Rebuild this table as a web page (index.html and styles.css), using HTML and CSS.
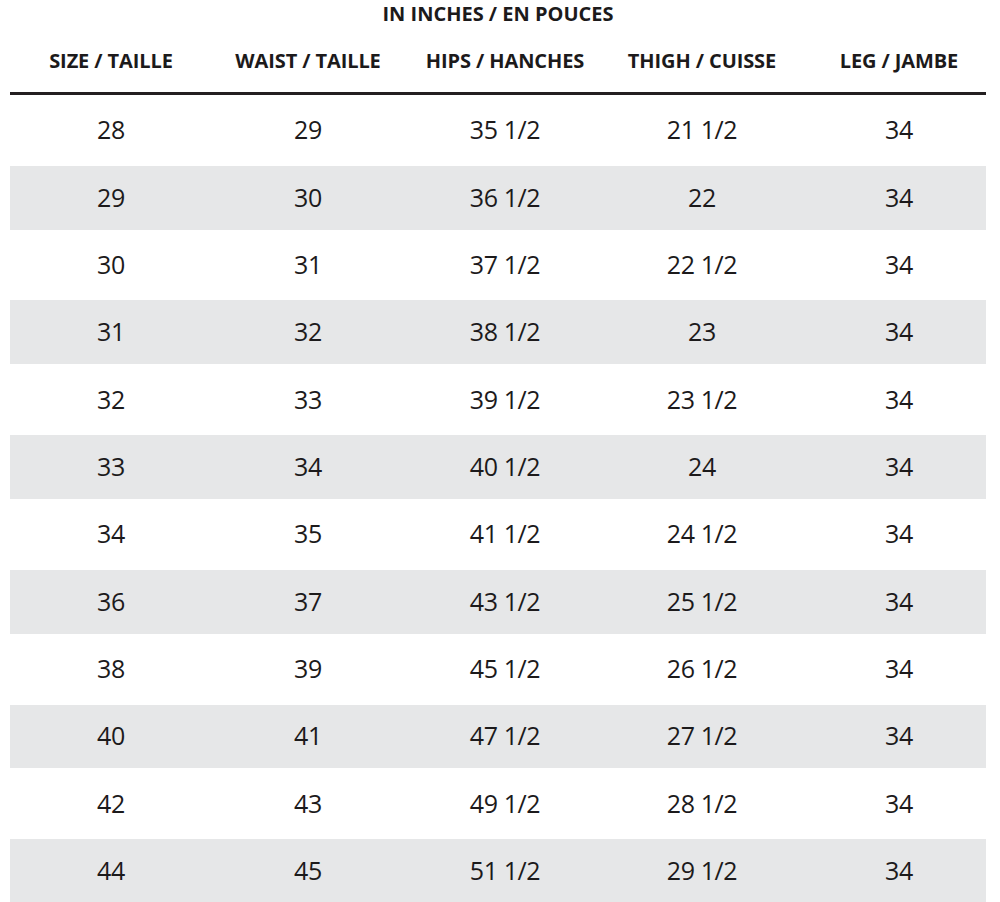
FILE: index.html
```html
<!DOCTYPE html>
<html lang="en">
<head>
<meta charset="utf-8">
<title>Size chart</title>
<link rel="stylesheet" href="styles.css">
</head>
<body>
<div class="chart">
  <div class="title">IN INCHES / EN POUCES</div>
  <div class="head">
    <div class="cell">SIZE / TAILLE</div>
    <div class="cell">WAIST / TAILLE</div>
    <div class="cell">HIPS / HANCHES</div>
    <div class="cell">THIGH / CUISSE</div>
    <div class="cell">LEG / JAMBE</div>
  </div>
  <div class="rule"></div>
  <div class="row"><div class="cell">28</div><div class="cell">29</div><div class="cell">35 1/2</div><div class="cell">21 1/2</div><div class="cell">34</div></div>
  <div class="row alt"><div class="cell">29</div><div class="cell">30</div><div class="cell">36 1/2</div><div class="cell">22</div><div class="cell">34</div></div>
  <div class="row"><div class="cell">30</div><div class="cell">31</div><div class="cell">37 1/2</div><div class="cell">22 1/2</div><div class="cell">34</div></div>
  <div class="row alt"><div class="cell">31</div><div class="cell">32</div><div class="cell">38 1/2</div><div class="cell">23</div><div class="cell">34</div></div>
  <div class="row"><div class="cell">32</div><div class="cell">33</div><div class="cell">39 1/2</div><div class="cell">23 1/2</div><div class="cell">34</div></div>
  <div class="row alt"><div class="cell">33</div><div class="cell">34</div><div class="cell">40 1/2</div><div class="cell">24</div><div class="cell">34</div></div>
  <div class="row"><div class="cell">34</div><div class="cell">35</div><div class="cell">41 1/2</div><div class="cell">24 1/2</div><div class="cell">34</div></div>
  <div class="row alt"><div class="cell">36</div><div class="cell">37</div><div class="cell">43 1/2</div><div class="cell">25 1/2</div><div class="cell">34</div></div>
  <div class="row"><div class="cell">38</div><div class="cell">39</div><div class="cell">45 1/2</div><div class="cell">26 1/2</div><div class="cell">34</div></div>
  <div class="row alt"><div class="cell">40</div><div class="cell">41</div><div class="cell">47 1/2</div><div class="cell">27 1/2</div><div class="cell">34</div></div>
  <div class="row"><div class="cell">42</div><div class="cell">43</div><div class="cell">49 1/2</div><div class="cell">28 1/2</div><div class="cell">34</div></div>
  <div class="row alt"><div class="cell">44</div><div class="cell">45</div><div class="cell">51 1/2</div><div class="cell">29 1/2</div><div class="cell">34</div></div>
</div>
</body>
</html>
```
FILE: styles.css
```css
html, body {
  margin: 0;
  padding: 0;
  background: #ffffff;
}
body {
  font-family: "Open Sans", "Noto Sans", "Liberation Sans", sans-serif;
  color: #1c1a1b;
  overflow: hidden;
}
.chart {
  margin: 0 14px 0 10px;
  width: 976px;
}
.title {
  height: 28px;
  line-height: 28px;
  text-align: center;
  font-weight: 700;
  font-size: 20px;
  letter-spacing: 0;
}
.head, .row {
  display: grid;
  grid-template-columns: repeat(5, 197px);
  padding-left: 2.5px;
  align-items: center;
  justify-items: center;
}
.head {
  height: 64px;
  font-weight: 700;
  font-size: 20px;
  letter-spacing: -0.1px;
}
.rule {
  height: 3px;
  background: #231f20;
}
.row {
  height: 70.8px;
  font-size: 25px;
  letter-spacing: -0.4px;
  padding-bottom: 2px;
  box-sizing: border-box;
}
.row.alt {
  height: 63.9px;
  background: #e6e7e8;
}
.cell {
  white-space: nowrap;
}
```
